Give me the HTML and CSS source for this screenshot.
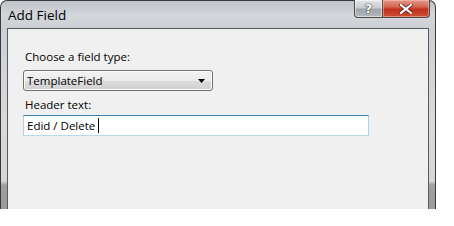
FILE: index.html
```html
<!DOCTYPE html>
<html>
<head>
<meta charset="utf-8">
<link rel="stylesheet" href="styles.css">
</head>
<body>
<div class="window">
  <div class="titlebar">
    <span class="title">Add Field</span>
    <div class="caption-buttons">
      <div class="cbtn help">?</div>
      <div class="cbtn close">
        <svg width="14" height="10" viewBox="0 0 14 10"><path d="M2 1 L12 9 M12 1 L2 9" stroke="#5a2018" stroke-width="3.6" stroke-linecap="square"/><path d="M2 1 L12 9 M12 1 L2 9" stroke="#ffffff" stroke-width="2.2" stroke-linecap="square"/></svg>
      </div>
    </div>
  </div>
  <div class="client">
    <div class="label">Choose a field type:</div>
    <div class="select">
      <span>TemplateField</span>
      <svg class="arrow" width="8" height="5" viewBox="0 0 8 5"><path d="M0 0 H7 L3.5 4 Z" fill="#000"/></svg>
    </div>
    <div class="label label2">Header text:</div>
    <div class="textbox"><span>Edid / Delete</span><span class="caret"></span></div>
  </div>
</div>
</body>
</html>
```
FILE: styles.css
```css
html, body {
  margin: 0;
  padding: 0;
  background: #ffffff;
}
body {
  font-family: "Open Sans", "Noto Sans", sans-serif;
  font-size: 11.5px;
  color: #000;
}
.window {
  position: relative;
  width: 436px;
  height: 209px;
  box-sizing: border-box;
  border: 1px solid #3a3a3a;
  border-bottom: none;
  border-radius: 7px 7px 0 0;
  padding: 0 6px;
  display: flex;
  flex-direction: column;
  background: linear-gradient(to bottom, #bfc3c8 0px, #d3d6da 14px, #ccd0d4 27px, #d8d9db 120px, #d6d6d6 180px, #a0a0a0 184px, #9a9a9a 209px);
}
.titlebar {
  height: 27px;
  display: flex;
  justify-content: space-between;
  align-items: flex-start;
}
.title {
  margin-top: 5px;
  margin-left: 1px;
  font-size: 13.5px;
  color: #000;
  line-height: 18px;
}
.caption-buttons {
  display: flex;
  margin-top: -1px;
  margin-right: -1px;
}
.cbtn {
  height: 18px;
  box-sizing: border-box;
  border: 1px solid #4a4a4a;
  border-top: none;
  display: flex;
  align-items: center;
  justify-content: center;
}
.help {
  width: 28px;
  border-radius: 0 0 0 4px;
  border-right: none;
  background: linear-gradient(to bottom, #e4e6e8 0%, #c8ccd0 45%, #9ea4aa 55%, #b4b8bc 100%);
  color: #fff;
  font-family: "DejaVu Sans", sans-serif;
  font-weight: bold;
  font-size: 13px;
  text-shadow: 0 0 1px #333, 0 0 1px #333, 0 0 1px #333;
  box-shadow: inset 0 0 0 1px rgba(255,255,255,0.5);
}
.close {
  width: 48px;
  border-radius: 0 0 4px 0;
  background: linear-gradient(to bottom, #e39a8c 0%, #d6654f 40%, #c0301b 55%, #cf4f36 100%);
  box-shadow: inset 0 0 0 1px rgba(255,200,190,0.5);
}
.client {
  flex: 1;
  background: #f0f0f0;
  border: 1px solid #555b62;
  border-bottom: none;
  padding: 20px 0 0 15px;
  display: flex;
  flex-direction: column;
  align-items: flex-start;
}
.label {
  line-height: 16px;
  padding-left: 2px;
}
.select {
  margin-top: 5px;
  width: 190px;
  height: 21px;
  box-sizing: border-box;
  border: 1px solid #707070;
  border-radius: 3px;
  background: linear-gradient(to bottom, #f2f2f2 0%, #ebebeb 50%, #dddddd 51%, #cfcfcf 100%);
  box-shadow: inset 0 0 0 1px #fcfcfc;
  display: flex;
  align-items: center;
  justify-content: space-between;
  padding: 0 6px 0 3px;
  line-height: 16px;
}
.arrow {
  margin-top: 1px;
}
.label2 {
  margin-top: 6px;
}
.textbox {
  margin-top: 2px;
  width: 346px;
  height: 21px;
  box-sizing: border-box;
  background: #fff;
  border: 1px solid;
  border-color: #3d7bad #b5cfe7 #b7d9ed #b5cfe7;
  display: flex;
  align-items: center;
  padding-left: 3px;
  line-height: 16px;
}
.caret {
  display: inline-block;
  width: 1px;
  height: 15px;
  background: #000;
  margin-left: 3px;
}
```
